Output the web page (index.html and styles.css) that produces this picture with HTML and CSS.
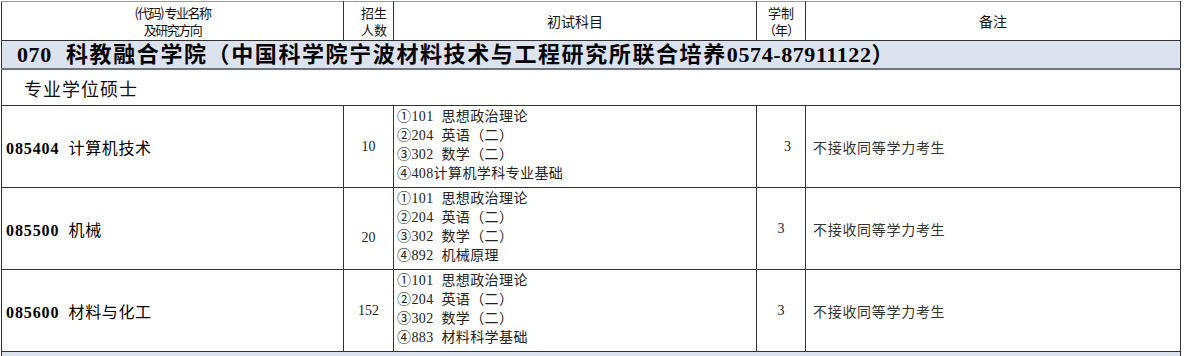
FILE: index.html
```html
<!DOCTYPE html>
<html lang="zh-CN">
<head>
<meta charset="utf-8">
<title>招生专业目录</title>
<link rel="stylesheet" href="styles.css">
</head>
<body>
<table class="plan">
  <colgroup>
    <col class="c-name">
    <col class="c-num">
    <col class="c-exam">
    <col class="c-years">
    <col class="c-note">
  </colgroup>
  <thead>
    <tr class="head">
      <th class="h-name"><span class="tiny">(代码) 专业名称</span><br><span class="tiny">及研究方向</span></th>
      <th class="h-num g-left">招生<br>人数</th>
      <th>初试科目</th>
      <th class="h-years">学制<br><span class="paren">（年）</span></th>
      <th>备注</th>
    </tr>
  </thead>
  <tbody>
    <tr class="college">
      <td colspan="5"><span class="n">070</span>&nbsp; 科教融合学院（中国科学院宁波材料技术与工程研究所联合培养<span class="n">0574-87911122</span>）</td>
    </tr>
    <tr class="degree">
      <td colspan="5">专业学位硕士</td>
    </tr>
    <tr class="major">
      <td class="name"><b>085404</b>&nbsp; 计算机技术</td>
      <td class="num g-left">10</td>
      <td class="exam">①101&nbsp; 思想政治理论<br>②204&nbsp; 英语（二）<br>③302&nbsp; 数学（二）<br>④408计算机学科专业基础</td>
      <td class="years right">3</td>
      <td class="note">不接收同等学力考生</td>
    </tr>
    <tr class="major">
      <td class="name"><b>085500</b>&nbsp; 机械</td>
      <td class="num g-left low">20</td>
      <td class="exam">①101&nbsp; 思想政治理论<br>②204&nbsp; 英语（二）<br>③302&nbsp; 数学（二）<br>④892&nbsp; 机械原理</td>
      <td class="years">3</td>
      <td class="note">不接收同等学力考生</td>
    </tr>
    <tr class="major">
      <td class="name"><b>085600</b>&nbsp; 材料与化工</td>
      <td class="num g-left">152</td>
      <td class="exam">①101&nbsp; 思想政治理论<br>②204&nbsp; 英语（二）<br>③302&nbsp; 数学（二）<br>④883&nbsp; 材料科学基础</td>
      <td class="years">3</td>
      <td class="note">不接收同等学力考生</td>
    </tr>
    <tr class="college tail">
      <td colspan="5">&nbsp;</td>
    </tr>
  </tbody>
</table>
</body>
</html>
```

FILE: styles.css
```css
html, body {
  margin: 0;
  padding: 0;
  background: #ffffff;
}

body {
  padding: 1px 0 0 1px;
  font-family: "Liberation Serif", "Noto Sans CJK SC", serif;
  color: #111;
}

.plan {
  border-collapse: collapse;
  table-layout: fixed;
  width: 1180px;
  border-left: 1px solid #555;
  border-right: 1px solid #444;
}

.c-name { width: 342px; }
.c-num { width: 50px; }
.c-exam { width: 363px; }
.c-years { width: 49px; }
.c-note { width: 375px; }

.plan th,
.plan td {
  padding: 0;
  border: 1px solid #333;
  overflow: hidden;
  white-space: nowrap;
}

.plan .g-left {
  border-left-color: #8a8a8a;
}

/* header */
.head th {
  height: 38px;
  border-top-color: #9a9a9a;
  font-family: "Noto Sans CJK SC", sans-serif;
  font-weight: 400;
  font-size: 14px;
  line-height: 17px;
  color: #111;
  text-align: center;
  vertical-align: middle;
}

.head .h-name {
  line-height: 16px;
}

.tiny {
  font-size: 13px;
  letter-spacing: -1.5px;
}

.head .h-num {
  font-size: 13px;
  text-align: right;
  padding-right: 6px;
}

.head .h-years {
  font-size: 13px;
}

.paren {
  letter-spacing: -1px;
}

/* college row */
.college td {
  height: 27px;
  background: #dce3ee;
  border-top-color: #7c8390;
  border-bottom: 2px solid #6e7480;
  padding-left: 15px;
  font-family: "Liberation Serif", "Noto Sans CJK SC", serif;
  font-weight: 700;
  font-size: 22px;
  letter-spacing: 1.6px;
  line-height: 27px;
  color: #000;
  vertical-align: middle;
}

.college .n {
  letter-spacing: 0.6px;
}

/* degree row */
.degree td {
  height: 35px;
  padding-left: 22px;
  font-family: "Noto Sans CJK SC", sans-serif;
  font-size: 18px;
  letter-spacing: 1px;
  line-height: 24px;
  color: #111;
  vertical-align: middle;
}

/* majors */
.major td {
  height: 81px;
  vertical-align: middle;
}

.major .name {
  padding-left: 4px;
  font-family: "Liberation Serif", "Noto Sans CJK SC", serif;
  font-size: 16px;
  letter-spacing: 0.6px;
  color: #000;
}

.major .name b {
  font-family: "Liberation Serif", serif;
  font-weight: 700;
  letter-spacing: 0.9px;
}

.major .num {
  text-align: center;
  font-size: 14px;
  color: #222;
}

.major .num.low {
  height: 63px;
  padding-top: 18px;
}

.major .exam {
  vertical-align: top;
  padding: 1px 0 0 3px;
  height: 80px;
  font-size: 14px;
  letter-spacing: 0.4px;
  line-height: 19px;
  color: #222;
}

.major .years {
  text-align: center;
  font-size: 14px;
  color: #222;
}

.major .years.right {
  text-align: right;
  padding-right: 14px;
}

.major .note {
  padding-left: 7px;
  font-family: "Noto Sans CJK SC", sans-serif;
  font-size: 14px;
  letter-spacing: 0.7px;
  color: #333;
}

.tail td {
  height: 30px;
}
```
